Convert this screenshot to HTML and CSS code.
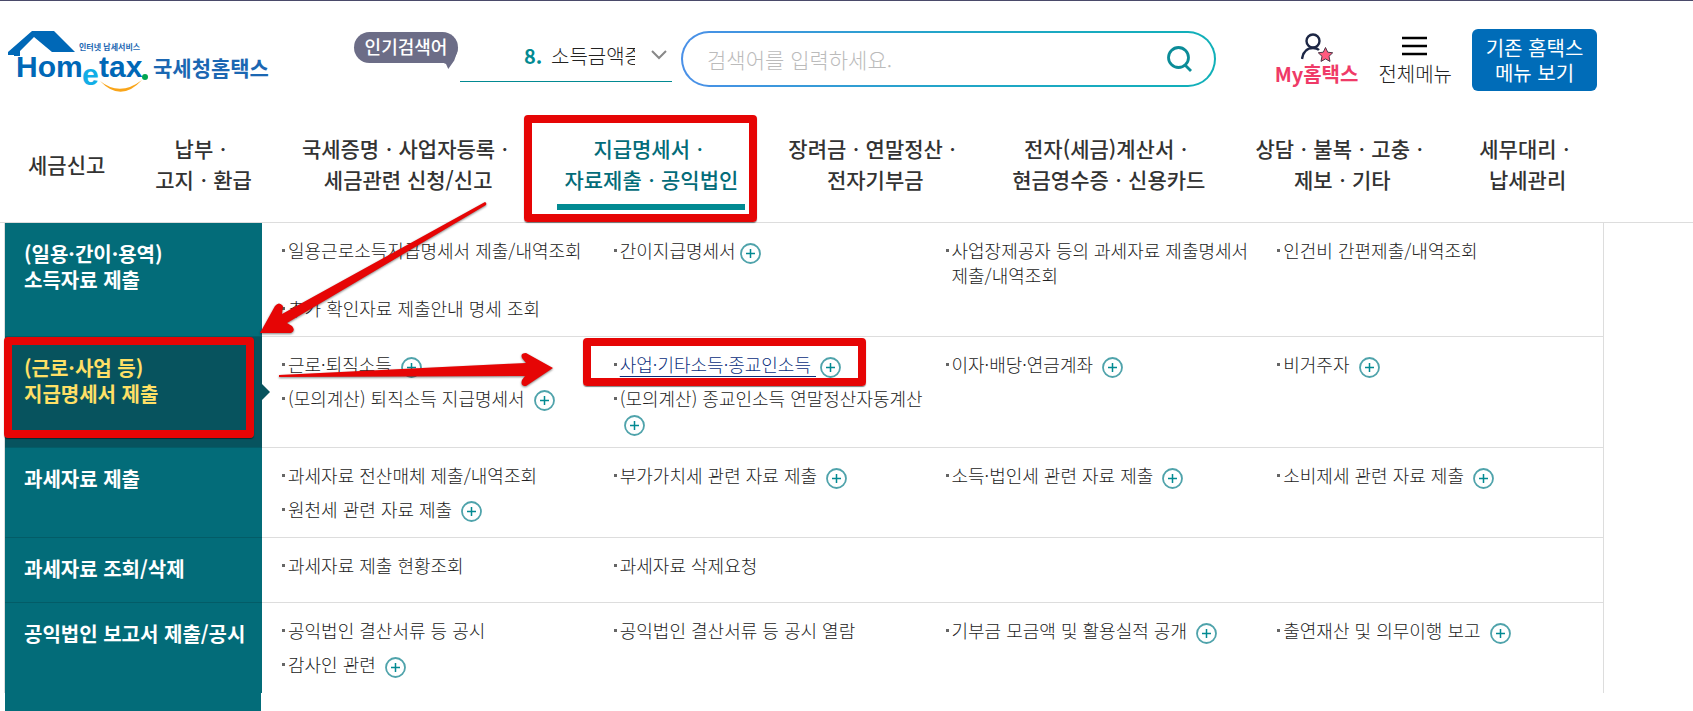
FILE: index.html
```html
<!DOCTYPE html>
<html lang="ko">

<head>
    <meta charset="UTF-8">
    <meta name="viewport" content="width=device-width, initial-scale=1.0">
    <title>국세청 홈택스</title>
    <link rel="stylesheet" href="styles.css">
</head>

<body>
    <!-- Shared icons -->
    <svg class="sprite" aria-hidden="true">
        <symbol id="plus" viewBox="0 0 21 21">
            <circle cx="10.5" cy="10.5" r="9.5" fill="#fff" stroke="#4fa3ab" stroke-width="1.8" />
            <path d="M6 10.5h9M10.5 6v9" stroke="#028a92" stroke-width="1.5" />
        </symbol>
    </svg>

    <!-- Header -->
    <header class="header">
        <a class="logo" href="#" aria-label="홈택스">
            <svg width="262" height="64" viewBox="0 0 262 64">
                <path d="M24 2H46L67 23H44L26 8L12 22V27H6V26H0V23Z" fill="#0068b7" />
                <text class="logo-small" x="71" y="21">인터넷 납세서비스</text>
                <text class="logo-en logo-home" x="8" y="48">Hom</text>
                <text class="logo-en logo-e" x="74" y="56">e</text>
                <text class="logo-en logo-tax" x="91" y="48">tax</text>
                <circle cx="137" cy="48" r="3" fill="#00a651" />
                <path d="M92 52Q112 68 134 51Q113 74 92 52Z" fill="#f9a51a" />
                <text class="logo-ko" x="145" y="47">국세청홈택스</text>
            </svg>
        </a>

        <div class="popular">
            <span class="popular-tag">인기검색어</span>
            <button class="popular-word" type="button">
                <b>8.</b>
                <span class="word">소득금액증명</span>
                <svg width="16" height="10" viewBox="0 0 16 10"><path d="M1 1l7 7 7-7" fill="none" stroke="#888" stroke-width="2" /></svg>
            </button>
        </div>

        <form class="search">
            <input type="text" placeholder="검색어를 입력하세요." aria-label="검색어">
            <button type="button" aria-label="검색">
                <svg width="26" height="26" viewBox="0 0 26 26"><circle cx="11.500" cy="11.500" r="10" fill="none" stroke="#0b8c98" stroke-width="2.800" /><path d="M18 19l6 6" stroke="#0b8c98" stroke-width="2.800" /></svg>
            </button>
        </form>

        <div class="tools">
            <a class="tool my" href="#">
                <svg width="32" height="30" viewBox="0 0 32 30">
                    <circle cx="12" cy="8" r="6.500" fill="none" stroke="#1d2745" stroke-width="2.400" />
                    <path d="M1 26C2 19 6 15 12 15Q16 15 18 17" fill="none" stroke="#1d2745" stroke-width="2.400" />
                    <path d="M24.500 14.500l2.200 4.700 5 .6-3.700 3.500 1 5.100-4.500-2.500-4.500 2.500 1-5.100-3.700-3.500 5-.6z" fill="#ff5a7e" stroke="#4b3646" stroke-width="1" />
                </svg>
                <span>My홈택스</span>
            </a>
            <a class="tool" href="#">
                <svg width="26" height="30" viewBox="0 0 26 30"><path d="M0 5h25M0 13h25M0 21h25" stroke="#000" stroke-width="2.600" /></svg>
                <span>전체메뉴</span>
            </a>
            <a class="old-menu" href="#">기존 홈택스<br>메뉴 보기</a>
        </div>
    </header>

    <!-- Main menu -->
    <nav class="nav">
        <a href="#">세금신고</a>
        <a href="#">납부ㆍ<br>고지ㆍ환급</a>
        <a href="#">국세증명ㆍ사업자등록ㆍ<br>세금관련 신청/신고</a>
        <a class="current" href="#">지급명세서ㆍ<br>자료제출ㆍ공익법인<span class="mark mark-nav"></span></a>
        <a href="#">장려금ㆍ연말정산ㆍ<br>전자기부금</a>
        <a href="#">전자(세금)계산서ㆍ<br>현금영수증ㆍ신용카드</a>
        <a href="#">상담ㆍ불복ㆍ고충ㆍ<br>제보ㆍ기타</a>
        <a href="#">세무대리ㆍ<br>납세관리</a>
    </nav>

    <!-- Sub menu -->
    <div class="menu">
        <section class="row">
            <h2><a href="#">(일용·간이·용역)<br>소득자료 제출</a></h2>
            <ul>
                <li><a href="#">일용근로소득지급명세서 제출/내역조회</a></li>
                <li><a href="#">간이지급명세서</a><button class="more" type="button" aria-label="더보기"><svg><use href="#plus" /></svg></button></li>
                <li><a href="#">사업장제공자 등의 과세자료 제출명세서 제출/내역조회</a></li>
                <li><a href="#">인건비 간편제출/내역조회</a></li>
                <li><a href="#">추가 확인자료 제출안내 명세 조회</a></li>
            </ul>
        </section>
        <section class="row active">
            <h2><a href="#">(근로·사업 등)<br>지급명세서 제출</a><span class="mark mark-side"></span></h2>
            <ul>
                <li><a href="#">근로·퇴직소득 </a><button class="more" type="button" aria-label="더보기"><svg><use href="#plus" /></svg></button></li>
                <li><a class="hover" href="#">사업·기타소득·종교인소득 </a><button class="more" type="button" aria-label="더보기"><svg><use href="#plus" /></svg></button><span class="mark mark-item"></span></li>
                <li><a href="#">이자·배당·연금계좌 </a><button class="more" type="button" aria-label="더보기"><svg><use href="#plus" /></svg></button></li>
                <li><a href="#">비거주자 </a><button class="more" type="button" aria-label="더보기"><svg><use href="#plus" /></svg></button></li>
                <li><a href="#">(모의계산) 퇴직소득 지급명세서 </a><button class="more" type="button" aria-label="더보기"><svg><use href="#plus" /></svg></button></li>
                <li><a href="#">(모의계산) 종교인소득 연말정산자동계산 </a><button class="more" type="button" aria-label="더보기"><svg><use href="#plus" /></svg></button></li>
            </ul>
        </section>
        <section class="row">
            <h2><a href="#">과세자료 제출</a></h2>
            <ul>
                <li><a href="#">과세자료 전산매체 제출/내역조회</a></li>
                <li><a href="#">부가가치세 관련 자료 제출 </a><button class="more" type="button" aria-label="더보기"><svg><use href="#plus" /></svg></button></li>
                <li><a href="#">소득·법인세 관련 자료 제출 </a><button class="more" type="button" aria-label="더보기"><svg><use href="#plus" /></svg></button></li>
                <li><a href="#">소비제세 관련 자료 제출 </a><button class="more" type="button" aria-label="더보기"><svg><use href="#plus" /></svg></button></li>
                <li><a href="#">원천세 관련 자료 제출 </a><button class="more" type="button" aria-label="더보기"><svg><use href="#plus" /></svg></button></li>
            </ul>
        </section>
        <section class="row">
            <h2><a href="#">과세자료 조회/삭제</a></h2>
            <ul>
                <li><a href="#">과세자료 제출 현황조회</a></li>
                <li><a href="#">과세자료 삭제요청</a></li>
            </ul>
        </section>
        <section class="row">
            <h2><a href="#">공익법인 보고서 제출/공시</a></h2>
            <ul>
                <li><a href="#">공익법인 결산서류 등 공시</a></li>
                <li><a href="#">공익법인 결산서류 등 공시 열람</a></li>
                <li><a href="#">기부금 모금액 및 활용실적 공개 </a><button class="more" type="button" aria-label="더보기"><svg><use href="#plus" /></svg></button></li>
                <li><a href="#">출연재산 및 의무이행 보고 </a><button class="more" type="button" aria-label="더보기"><svg><use href="#plus" /></svg></button></li>
                <li><a href="#">감사인 관련 </a><button class="more" type="button" aria-label="더보기"><svg><use href="#plus" /></svg></button></li>
            </ul>
        </section>
    </div>
    <div class="menu-tail"></div>

    <!-- Guide arrows -->
    <svg class="arrows" width="600" height="420" viewBox="0 0 600 420" aria-hidden="true">
        <path d="M485 202Q487 203 486 205L287 323L292 326Q296 331 291 333L260 333L275 306Q279 301 283 306L282 314Z" />
        <path d="M279 375L526 363L522 358Q520 353 526 353L553 368L526 386Q520 386 522 380L525 376L279 377Z" />
    </svg>
</body>

</html>
```
FILE: styles.css
```css
* {
    box-sizing: border-box;
}
body {
    margin: 0;
    position: relative;
    border-top: 1px solid #4a4a6a;
    background-color: #fff;
    color: #333;
    font-family: "Noto Sans CJK KR", "Noto Sans", sans-serif;
    font-size: 18px;
    overflow: hidden;
}
a {
    color: inherit;
    text-decoration: none;
}
button {
    border: 0;
    padding: 0;
    background: none;
    color: inherit;
    font: inherit;
    cursor: pointer;
}
.sprite {
    position: absolute;
    width: 0;
    height: 0;
}

/* Header */
.header {
    display: flex;
    align-items: flex-start;
    padding: 28px 96px 0 8px;
    height: 100px;
}
.logo svg {
    display: block;
}
.logo text {
    fill: #1b67b2;
    font-weight: 700;
}
.logo .logo-small {
    font-size: 8px;
}
.logo .logo-en {
    fill: #0068b7;
    font-family: "Liberation Sans Narrow", "Liberation Sans", sans-serif;
    font-size: 30px;
}
.logo .logo-e {
    fill: #12aee6;
    font-size: 30px;
}
.logo .logo-ko {
    font-size: 21px;
}
.popular {
    display: flex;
    gap: 2px;
    margin-left: 84px;
}
.popular-tag {
    position: relative;
    width: 104px;
    height: 31px;
    margin-top: 3px;
    border-radius: 16px;
    background-color: #6c6d87;
    color: #fff;
    font-size: 18px;
    font-weight: 500;
    line-height: 29px;
    text-align: center;
}
/* Speech bubble tail */
.popular-tag::after {
    content: "";
    position: absolute;
    right: 0;
    top: 16px;
    width: 15px;
    height: 21px;
    background-color: #6c6d87;
    clip-path: polygon(0 50%, 0 70%, 20% 76%, 35% 100%, 75% 60%, 94% 20%, 98% 0);
}
.popular-word {
    display: flex;
    align-items: center;
    width: 212px;
    height: 53px;
    padding-left: 64px;
    border-bottom: 1px solid #028a92;
    color: #222;
    font-size: 20px;
    font-weight: 300;
}
.popular-word b {
    width: 27px;
    color: #028a92;
    font-weight: 700;
    text-align: left;
}
.popular-word .word {
    width: 84px;
    margin-right: 16px;
    overflow: hidden;
    white-space: nowrap;
}
.search {
    display: flex;
    flex: 1;
    align-items: center;
    height: 56px;
    margin: 2px 59px 0 9px;
    padding: 0 21px 0 24px;
    border: 2px solid transparent;
    border-radius: 28px;
    background: linear-gradient(#fff, #fff) padding-box, linear-gradient(90deg, #4a90e8, #22a5c8 50%, #10b0b8) border-box;
}
.search input {
    flex: 1;
    min-width: 0;
    border: 0;
    padding: 0;
    outline: 0;
    background: none;
    font-family: inherit;
    font-size: 21px;
    font-weight: 300;
}
.search input::placeholder {
    color: #bbb;
}
.search svg {
    display: block;
}
.tools {
    display: flex;
}
.tool {
    display: flex;
    flex-direction: column;
    align-items: center;
    margin: 4px 20px 0 0;
    color: #222;
    font-size: 20px;
    font-weight: 300;
    line-height: 24px;
}
.tool svg {
    margin-bottom: -1px;
}
.my {
    color: #ef3a67;
    font-weight: 700;
}
.old-menu {
    width: 125px;
    height: 62px;
    padding-top: 6px;
    border-radius: 6px;
    background-color: #006cb8;
    color: #fff;
    font-size: 20px;
    font-weight: 400;
    line-height: 25px;
    text-align: center;
}

/* Main menu */
.nav {
    display: flex;
    gap: 36px;
    height: 122px;
    padding: 17px 0 0 21px;
    border-bottom: 1px solid #ddd;
}
.nav a {
    display: grid;
    position: relative;
    align-content: center;
    height: 92px;
    padding: 0 7px;
    font-size: 21px;
    font-weight: 500;
    line-height: 31px;
    text-align: center;
    white-space: nowrap;
}
.nav .current {
    color: #036c79;
}
.nav .current::after {
    content: "";
    position: absolute;
    left: 0;
    right: 0;
    bottom: 0;
    height: 6px;
    background-color: #028a92;
}

/* Sub menu */
.menu {
    margin: 0 89px 0 4px;
    border: 1px solid #ddd;
    border-width: 0 1px;
}
.row {
    display: flex;
}
.row h2 {
    position: relative;
    flex: 0 0 257px;
    margin: 0;
    padding: 18px 0 20px 19px;
    border-bottom: 1px solid #035c67;
    background-color: #036c79;
    color: #fff;
    font-size: 20px;
    font-weight: 700;
    line-height: 26px;
}
.row ul {
    display: grid;
    flex: 1;
    grid-template-columns: repeat(4, 1fr);
    align-content: start;
    row-gap: 8px;
    margin: 0;
    padding: 15px 0 15px 14px;
    border-bottom: 1px solid #ddd;
    list-style: none;
}
.row li {
    position: relative;
    padding-left: 12px;
    color: #222;
    font-weight: 300;
    line-height: 25px;
    word-break: keep-all;
}
.row li::before {
    content: "";
    position: absolute;
    left: 6px;
    top: 11px;
    width: 3px;
    height: 3px;
    background-color: #666;
}
.row:last-child h2,
.row:last-child ul {
    border-bottom: 0;
}
.active h2 {
    background-color: #07535e;
    color: #ffe066;
}
.active h2::after {
    content: "";
    position: absolute;
    left: 100%;
    top: 50%;
    margin-top: -8px;
    border: 8px solid transparent;
    border-left-color: #07535e;
    border-right: 0;
}
.active ul {
    padding-bottom: 11px;
}
.hover {
    color: #0b2f7d;
    text-decoration: underline;
    text-decoration-thickness: 1px;
    text-underline-offset: 4px;
}
.more {
    width: 21px;
    height: 21px;
    margin-left: 4px;
    vertical-align: middle;
}
.more svg {
    display: block;
    width: 21px;
    height: 21px;
}
.menu-tail {
    width: 256px;
    height: 19px;
    margin-left: 5px;
    background-color: #036c79;
}

/* Red guide marks */
.mark {
    position: absolute;
    z-index: 2;
    border: 8px solid #e60505;
    border-radius: 4px;
    box-shadow: 0 1px 1px rgba(0, 0, 0, 0.5);
    pointer-events: none;
}
.mark-nav {
    inset: -3px -12px -12px -33px;
}
.mark-side {
    inset: 0 8px 9px -1px;
}
.mark-item {
    left: -25px;
    top: -14px;
    width: 283px;
    height: 48px;
}
.arrows {
    position: absolute;
    left: 0;
    top: -1px;
    z-index: 3;
    fill: #e60505;
    filter: drop-shadow(0 1px 1px rgba(0, 0, 0, 0.5));
    pointer-events: none;
}
```
